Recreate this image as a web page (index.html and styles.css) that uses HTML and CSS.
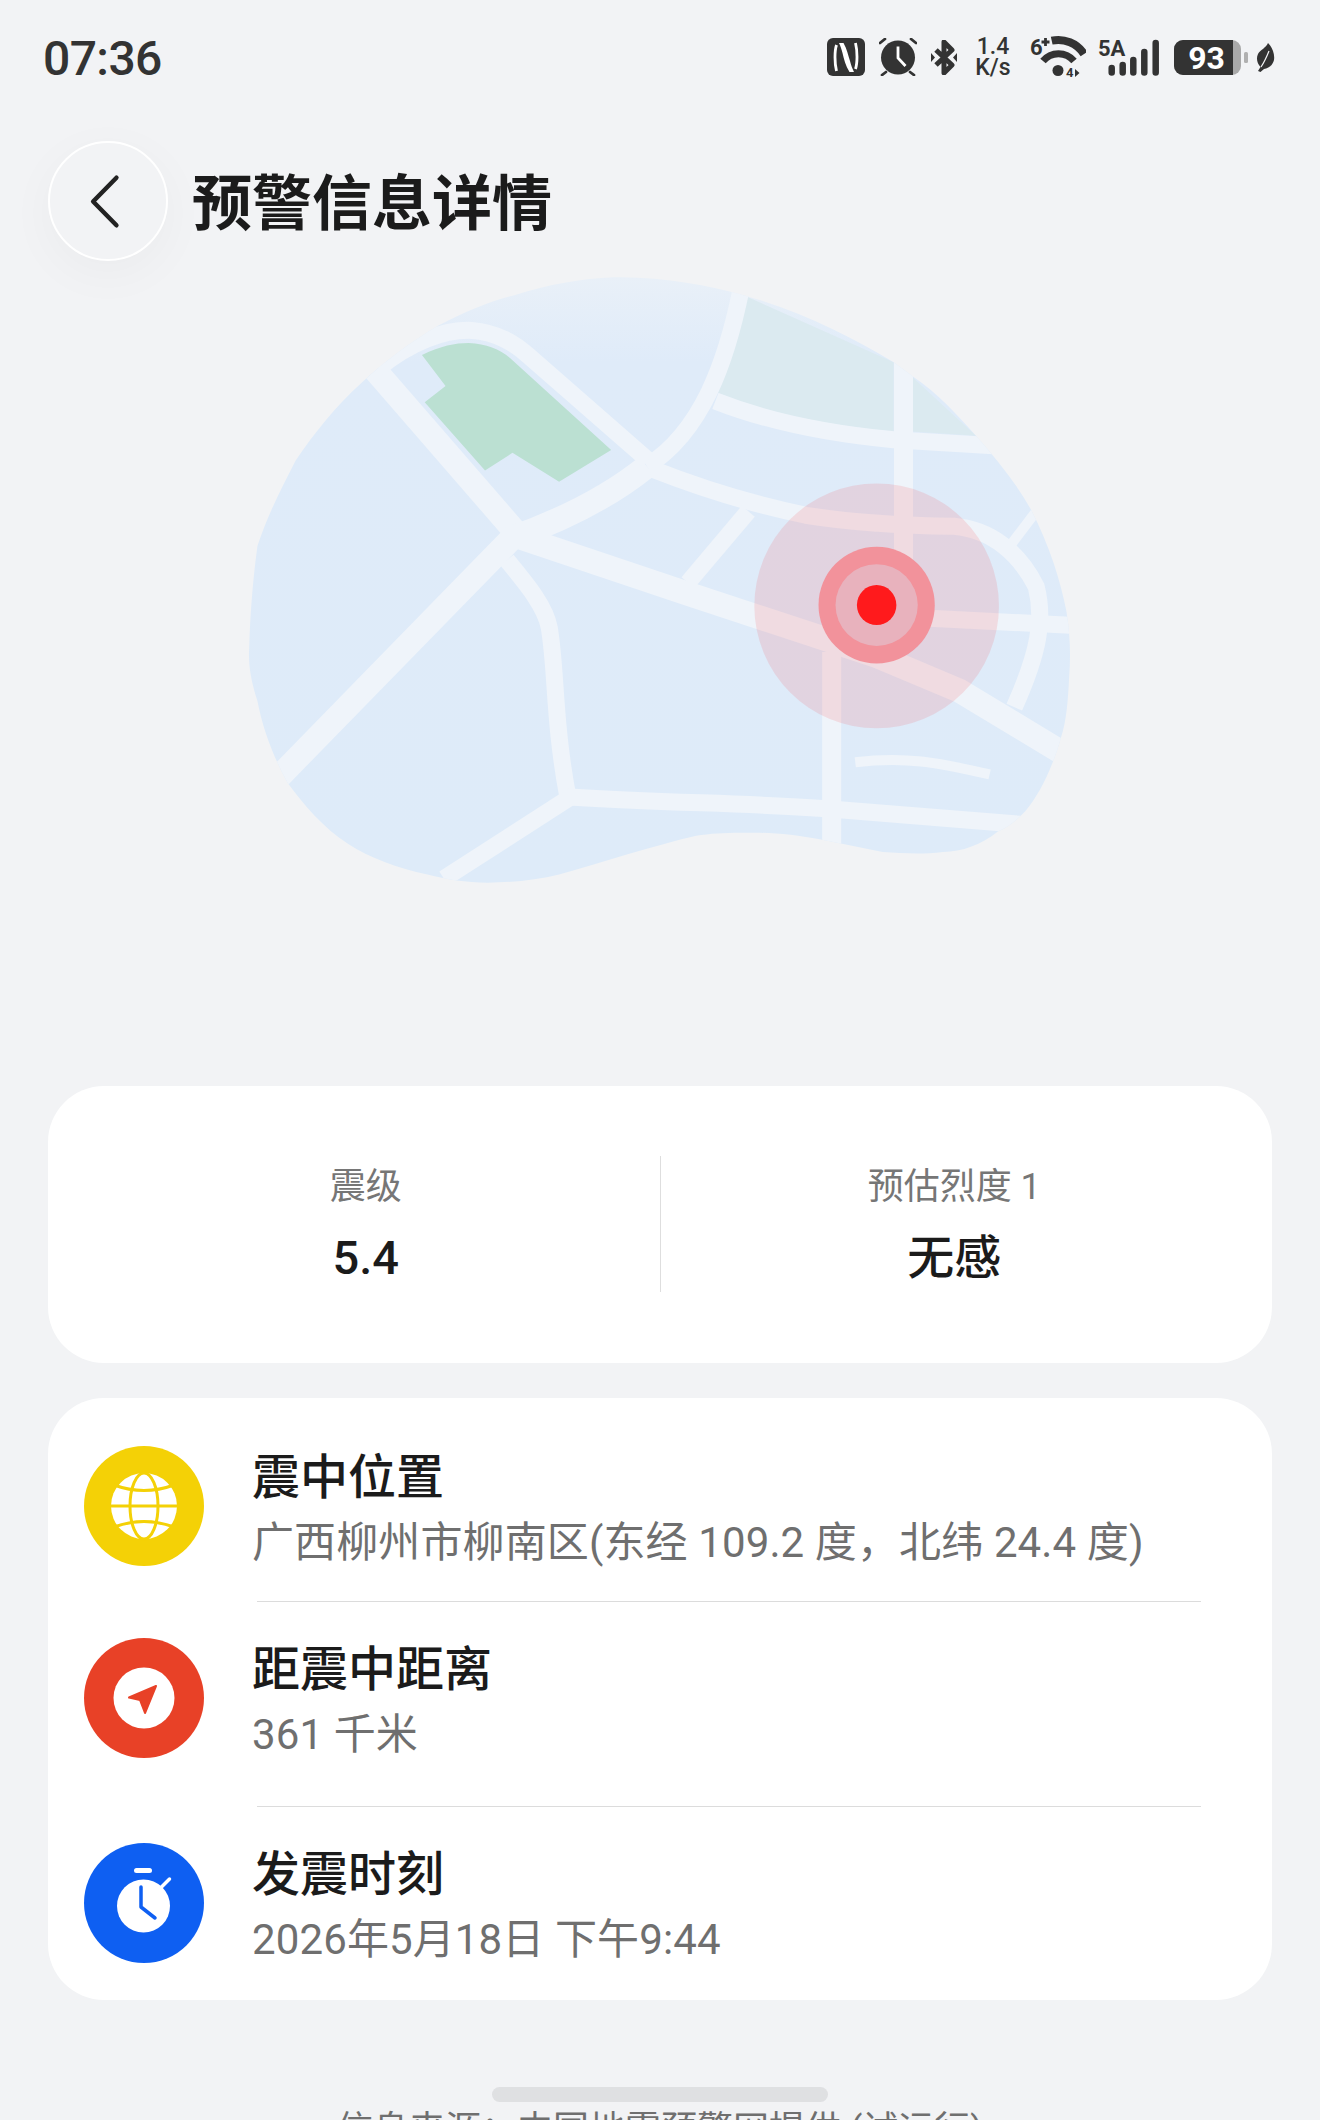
FILE: index.html
```html
<!DOCTYPE html>
<html lang="zh-CN">
<head>
<meta charset="utf-8">
<title>预警信息详情</title>
<link rel="stylesheet" href="styles.css">
</head>
<body>
<div class="page">
  <div class="status">
    <span class="time">07:36</span>
    <div class="status-icons">
      <svg class="i-nfc" viewBox="0 0 38 38"><rect width="38" height="38" rx="6" fill="#333"/><path d="M9.500 33C7.500 25 7.500 13 9.500 7M28.500 5C30.500 13 30.500 25 28.500 31" fill="none" stroke="#fff" stroke-width="2.800"/><path d="M12 5h4.500C20 11 21 17 23 23c1 4 2.500 8 4 11h-4.500C18.500 28 17 21 15.500 15 14.500 11 13.500 8 12 5z" fill="#fff"/></svg>
      <svg class="i-alarm" viewBox="0 0 38 38"><circle cx="19" cy="19.500" r="17" fill="#333"/><path d="M19 8.500V20l7.500 8" fill="none" stroke="#fff" stroke-width="2.800"/><path d="M1 5l5-4M32 1l5 4M7 34l-4 3M31 34l4 3" fill="none" stroke="#333" stroke-width="2.800" stroke-linecap="round"/></svg>
      <svg class="i-bt" viewBox="0 0 26 35"><path d="M5 10l16 15-8 8V2l8 8L5 25" fill="none" stroke="#333" stroke-width="5" stroke-linejoin="round"/><path d="M0 13l4 4.500-4 4.500zM26 13l-4 4.500 4 4.500z" fill="#333"/></svg>
      <div class="speed"><span>1.4</span><span>K/s</span></div>
      <svg class="i-wifi" viewBox="-4 -6 60 52"><text class="st-num" x="0" y="18">6</text><path d="M15.500 1v8M11.500 5h8" stroke="#333" stroke-width="2.800"/><path d="M21.700 3.700A30.500 30.500 0 0 1 54 17" fill="none" stroke="#333" stroke-width="8"/><path d="M13 24a20 20 0 0 1 31 0" fill="none" stroke="#333" stroke-width="7"/><circle cx="28" cy="33.500" r="5.500" fill="#333"/><text class="st-tiny" x="36" y="40">4</text><path d="M45 32v8l4.500-4z" fill="#333"/></svg>
      <svg class="i-sig" viewBox="-4 -6 70 51"><text class="st-num" x="0" y="18">5A</text><g stroke="#333" stroke-width="6.500" stroke-linecap="round"><path d="M13.700 30v4.500M24.700 27v7.500M35.300 22v12.500M46.300 14v20.500M57.700 5v29.500"/></g></svg>
      <svg class="i-bat" viewBox="0 -3 74 41"><rect width="67" height="35" rx="9" fill="#a9a9a9"/><path d="M9 0h50v35H9a9 9 0 0 1-9-9V9a9 9 0 0 1 9-9z" fill="#333"/><rect x="70" y="12" width="4" height="11" rx="1.500" fill="#b0b0b0"/><text class="bat-num" x="32.500" y="29">93</text></svg>
      <svg class="i-leaf" viewBox="0 0 19 29"><path d="M12 0c4 4 7 11 6 17-1 5-6 9-10 9l-3.500 3-2.500-1 2.500-4C1 20 0 15 2 11c2-4 8-6 10-11z" fill="#333"/><path d="M13 8c-2 5-4 10-8 16" fill="none" stroke="#f2f3f5" stroke-width="1.200"/></svg>
    </div>
  </div>

  <header class="header">
    <button class="back" type="button" aria-label="返回">
      <svg viewBox="0 0 116 116"><path d="M67 34 43.500 58 67 82" fill="none" stroke="#222" stroke-width="4.500" stroke-linecap="round" stroke-linejoin="round"/></svg>
    </button>
    <h1 class="title">预警信息详情</h1>
  </header>

  <svg class="map" viewBox="0 2 1568 1568" preserveAspectRatio="none">
    <defs>
      <linearGradient id="blobFill" x1="0" y1="0" x2="0" y2="1">
        <stop offset="0" stop-color="#e9f0f8"/>
        <stop offset=".14" stop-color="#dfebf9"/>
        <stop offset="1" stop-color="#deebf9"/>
      </linearGradient>
      <clipPath id="blobClip"><path d="M700 42C790 40 870 62 935 85 1040 125 1130 185 1210 250L1245 285C1290 325 1330 385 1360 430 1400 490 1435 550 1460 610 1495 700 1515 790 1525 860 1532 920 1533 970 1530 1020 1528 1080 1525 1130 1515 1170 1498 1250 1475 1310 1450 1350 1432 1375 1418 1390 1400 1400 1370 1432 1335 1450 1300 1450 1255 1457 1225 1452 1190 1450L1080 1420C1030 1408 990 1402 950 1403 910 1402 880 1404 850 1410 770 1435 680 1475 600 1505 560 1518 515 1525 470 1525 430 1525 395 1517 360 1505 305 1490 255 1465 215 1430 170 1390 135 1335 105 1280 80 1220 60 1150 50 1080 38 1030 33 990 35 950 37 860 42 780 50 700 70 620 95 555 120 490 155 420 195 355 240 300 280 250 330 200 380 160 430 125 475 100 520 85 580 60 640 45 700 42Z"/></clipPath>
    </defs>
    <path d="M700 42C790 40 870 62 935 85 1040 125 1130 185 1210 250L1245 285C1290 325 1330 385 1360 430 1400 490 1435 550 1460 610 1495 700 1515 790 1525 860 1532 920 1533 970 1530 1020 1528 1080 1525 1130 1515 1170 1498 1250 1475 1310 1450 1350 1432 1375 1418 1390 1400 1400 1370 1432 1335 1450 1300 1450 1255 1457 1225 1452 1190 1450L1080 1420C1030 1408 990 1402 950 1403 910 1402 880 1404 850 1410 770 1435 680 1475 600 1505 560 1518 515 1525 470 1525 430 1525 395 1517 360 1505 305 1490 255 1465 215 1430 170 1390 135 1335 105 1280 80 1220 60 1150 50 1080 38 1030 33 990 35 950 37 860 42 780 50 700 70 620 95 555 120 490 155 420 195 355 240 300 280 250 330 200 380 160 430 125 475 100 520 85 580 60 640 45 700 42Z" fill="url(#blobFill)"/>
    <g clip-path="url(#blobClip)">
      <path class="pale" d="M890 325C915 250 925 170 935 85L1210 250V420C1090 405 980 375 890 325ZM1243 285 1360 430 1243 420Z"/>
      <path class="road r-wide" d="M265 270 520 665"/>
      <path class="road r-wide" d="M530 680 830 815 1180 970 1330 1055 1540 1225"/>
      <path class="road r-wide" d="M90 1265 515 680C620 630 700 570 760 505"/>
      <path class="road" d="M760 505C860 420 905 250 932 70"/>
      <path class="road" d="M270 265C330 200 390 170 440 172 490 178 520 205 545 235L762 490"/>
      <path class="road" d="M770 512C870 565 960 600 1050 625 1130 642 1210 650 1320 652 1390 660 1440 720 1470 800 1485 880 1475 960 1430 1095"/>
      <path class="road" d="M885 345C980 395 1090 425 1210 440L1400 455"/>
      <path class="road r-vert" d="M1228 230V800"/>
      <path class="road" d="M945 615 835 790"/>
      <path class="road" d="M505 735C545 800 575 850 582 900 595 1000 590 1130 616 1315"/>
      <path class="road" d="M625 1312 390 1515"/>
      <path class="road" d="M620 1315C800 1330 950 1330 1100 1345L1440 1382"/>
      <path class="road r-vert" d="M1097 960V1440"/>
      <path class="road" d="M1240 875 1540 895"/>
      <path class="road r-thin" d="M1425 695 1470 615"/>
      <path class="road r-thin" d="M1140 1230C1230 1215 1290 1230 1385 1260"/>
      <path class="park" d="M350 232C385 210 410 203 435 203 470 205 495 220 515 245L695 465 600 543 515 472 465 515 355 348 393 308Z"/>
    </g>
    <ellipse class="pulse-outer" cx="1179" cy="847" rx="223" ry="300"/>
    <ellipse class="pulse-ring" cx="1179" cy="845" rx="106" ry="143"/>
    <ellipse class="pulse-inner" cx="1179" cy="845" rx="75" ry="100"/>
    <ellipse class="pulse-dot" cx="1179" cy="845" rx="36" ry="49"/>
  </svg>

  <section class="card stats">
    <div class="stat">
      <div class="stat-label">震级</div>
      <div class="stat-value">5.4</div>
    </div>
    <div class="stat-rule"></div>
    <div class="stat">
      <div class="stat-label">预估烈度 1</div>
      <div class="stat-value">无感</div>
    </div>
  </section>

  <section class="card list">
    <div class="row row-first">
      <svg class="icon" viewBox="0 0 120 120"><circle cx="60" cy="60" r="60" fill="#f4d106"/><circle cx="60" cy="60" r="33" fill="#fff"/><g fill="none" stroke="#f4d106" stroke-width="3"><ellipse cx="60" cy="60" rx="14" ry="33"/><path d="M27 60h66M30 39Q60 50 90 39M30 81Q60 70 90 81"/></g></svg>
      <div class="row-text">
        <div class="row-title">震中位置</div>
        <div class="row-sub">广西柳州市柳南区(东经 109.2 度，北纬 24.4 度)</div>
      </div>
    </div>
    <div class="row row-mid">
      <svg class="icon" viewBox="0 0 120 120"><circle cx="60" cy="60" r="60" fill="#e84127"/><circle cx="60" cy="60" r="30.500" fill="#fff"/><path d="M72 48 45 59.500 56 62 61 75Z" fill="#e84127" stroke="#e84127" stroke-width="2" stroke-linejoin="round"/></svg>
      <div class="row-text">
        <div class="row-title">距震中距离</div>
        <div class="row-sub">361 千米</div>
      </div>
    </div>
    <div class="row row-last">
      <svg class="icon" viewBox="0 0 120 120"><circle cx="60" cy="60" r="60" fill="#0e5ff2"/><circle cx="59.500" cy="63" r="26.500" fill="#fff"/><rect x="50" y="25" width="18" height="5" rx="2.500" fill="#fff"/><path d="M77.500 44 85.500 36" stroke="#fff" stroke-width="3.500" stroke-linecap="round"/><path d="M57 44V64L71 75" fill="none" stroke="#0e5ff2" stroke-width="3.500" stroke-linecap="round" stroke-linejoin="round"/></svg>
      <div class="row-text">
        <div class="row-title">发震时刻</div>
        <div class="row-sub">2026年5月18日 下午9:44</div>
      </div>
    </div>
  </section>

  <p class="source">信息来源：中国地震预警网提供 (试运行)</p>
  <div class="home-bar"></div>
</div>
</body>
</html>
```

FILE: styles.css
```css
* { box-sizing: border-box; }
html, body { margin: 0; padding: 0; }
body {
  background: #f2f3f5;
  font-family: Roboto, "Noto Sans CJK SC", sans-serif;
  color: #1b1b1b;
}
.page {
  position: relative;
  width: 1320px;
  height: 2120px;
  overflow: hidden;
}

/* status bar */
.status {
  height: 114px;
  padding: 0 45px 0 43px;
  display: flex;
  align-items: center;
  justify-content: space-between;
}
.time { font-size: 48px; font-weight: 500; color: #333; letter-spacing: -.6px; margin-top: 2px; }
.status-icons { display: flex; align-items: center; gap: 14px; }
.status-icons svg { display: block; flex: none; }
.i-nfc, .i-alarm { width: 38px; height: 38px; }
.i-bt { width: 26px; height: 35px; }
.speed {
  width: 36px;
  margin-left: 4px;
  display: flex;
  flex-direction: column;
  align-items: center;
  font-size: 23px;
  line-height: 21px;
  font-weight: 500;
  color: #333;
}
.i-wifi { width: 60px; height: 52px; margin: 0 -2px 0 1px; }
.i-sig { width: 70px; height: 51px; margin: 0 -4px; }
.i-bat { width: 74px; height: 41px; }
.i-leaf { width: 19px; height: 29px; margin-left: -6px; }
.st-num { font: 700 22px Roboto, sans-serif; fill: #333; }
.st-tiny { font: 700 13px Roboto, sans-serif; fill: #333; }
.bat-num { font: 700 32px Roboto, sans-serif; fill: #fff; text-anchor: middle; }

/* header */
.header {
  height: 120px;
  margin-top: 27px;
  padding-left: 48px;
  display: flex;
  align-items: center;
  gap: 24px;
}
.back {
  width: 120px;
  height: 120px;
  padding: 0;
  border: 2.500px solid #fff;
  border-radius: 50%;
  background: #f2f3f5;
  box-shadow: 0 12px 50px rgba(0, 0, 0, .035);
}
.back svg { display: block; width: 115px; height: 115px; }
.title {
  margin: -5px 0 0;
  font-family: "Noto Sans CJK SC", sans-serif;
  font-size: 60px;
  font-weight: 700;
  line-height: 80px;
  color: #1b1b1b;
}

/* map */
.map {
  display: block;
  width: 860px;
  height: 640px;
  margin: 0 0 0 230px;
}
.pale { fill: #dbeaf0; }
.park { fill: #bbe0d2; }
.road {
  fill: none;
  stroke: #eff4fa;
  stroke-width: 17;
  vector-effect: non-scaling-stroke;
}
.r-wide { stroke-width: 24; }
.r-vert { stroke-width: 19; }
.r-thin { stroke-width: 10; }
.pulse-outer { fill: rgba(250, 70, 80, .14); }
.pulse-ring { fill: #f2929b; }
.pulse-inner { fill: #e8b2bd; }
.pulse-dot { fill: #ff1a1c; }

/* cards */
.card {
  margin: 0 48px;
  background: #fff;
  border-radius: 56px;
}
.stats {
  height: 277px;
  margin-top: 185px;
  padding: 70px 24px 71px;
  display: flex;
}
.stat { flex: 1; display: flex; flex-direction: column; align-items: center; }
.stat-rule { width: 1px; background: #dedede; flex: none; }
.stat-label {
  margin-top: 1px;
  font-size: 36px;
  line-height: 60px;
  color: #767676;
}
.stat-value {
  margin-top: 11px;
  font-size: 47px;
  line-height: 60px;
  font-weight: 500;
  color: #1b1b1b;
}

.list {
  margin-top: 35px;
  height: 602px;
  padding: 12px 71px 0 36px;
  display: flex;
  flex-direction: column;
}
.row {
  height: 192px;
  padding: 36px 0;
  display: flex;
  align-items: center;
  gap: 48px;
  position: relative;
}
.row-mid { height: 205px; padding-bottom: 49px; }
.row-first::after,
.row-mid::after {
  content: "";
  position: absolute;
  left: 173px;
  right: 0;
  bottom: 0;
  height: 1px;
  background: #dcdcdc;
}
.icon { display: block; width: 120px; height: 120px; flex: none; }
.row-text { display: flex; flex-direction: column; gap: 5px; margin-top: 9px; }
.row-title {
  font-size: 48px;
  line-height: 60px;
  font-weight: 500;
  color: #1b1b1b;
}
.row-sub {
  font-size: 42px;
  line-height: 60px;
  letter-spacing: .12px;
  color: #6f6f6f;
  white-space: nowrap;
}

/* footer */
.source {
  margin: 105px 0 0;
  text-align: center;
  font-size: 36px;
  line-height: 50px;
  color: #6f6f6f;
}
.home-bar {
  position: absolute;
  left: 492px;
  top: 2087px;
  width: 336px;
  height: 15px;
  border-radius: 8px;
  background: #dfe0e2;
}
```
